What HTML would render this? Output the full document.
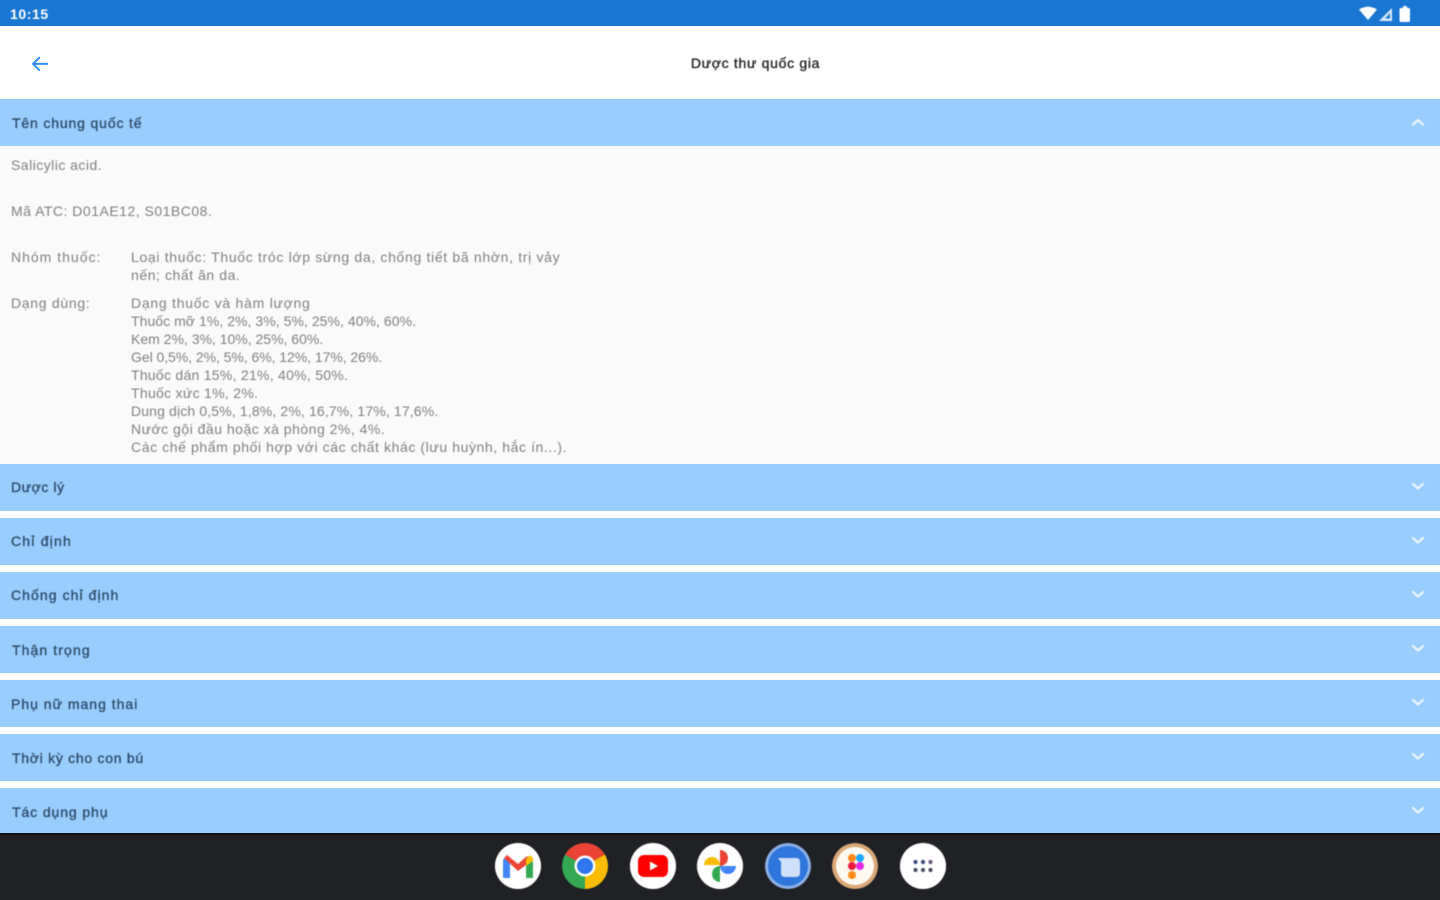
<!DOCTYPE html>
<html lang="vi">
<head>
<meta charset="utf-8">
<title>Dược thư quốc gia</title>
<style>
html,body{margin:0;padding:0;background:#fafafa}
body{width:1440px;height:900px;overflow:hidden;position:relative;font-family:"Liberation Sans","Noto Sans CJK SC",sans-serif}
.abs{position:absolute}
#status{left:0;top:0;width:1440px;height:26px;background:#1976d2}
#time{left:10px;top:5px;color:#fff;font-size:14px;line-height:18px;font-weight:bold;letter-spacing:.6px;filter:blur(.6px)}
#appbar{left:0;top:26px;width:1440px;height:73px;background:#fff}
#title{left:0;top:54px;width:1511px;text-align:center;font-size:14px;line-height:18px;color:#222;letter-spacing:.7px;-webkit-text-stroke:.35px #222;filter:blur(.6px)}
.hd{position:absolute;left:0;width:1440px;height:47px;background:#99ccff}
.hd span{position:absolute;left:11px;top:14px;font-size:14px;line-height:18px;color:#2b4a66;-webkit-text-stroke:.3px #2b4a66;filter:blur(.6px);white-space:nowrap}
.hd svg{position:absolute;left:1410px;top:14px;filter:blur(.4px)}
.t{position:absolute;font-size:14px;line-height:18px;color:#808080;white-space:nowrap;filter:blur(.6px)}
.t b{display:block;font-weight:normal}
#dock{left:0;top:833px;width:1440px;height:67px;background:#202124}
#dockline{left:0;top:833px;width:1440px;height:2px;background:#111214}
.ic{position:absolute;top:843px;width:46px;height:46px;border-radius:50%;background:#fff;overflow:hidden;filter:blur(.5px)}
</style>
</head>
<body>
<div class="abs" id="status"></div>
<div class="abs" id="time">10:15</div>
<svg class="abs" style="left:1355px;top:3px;filter:blur(.5px)" width="60" height="20" viewBox="0 0 60 20">
<path d="M4 6.500Q13 1 22 6.500L13 17Z" fill="#fff"/>
<path d="M37 5V18H24Z" fill="#fff" opacity=".85"/>
<path d="M35 10V15.500H30Z" fill="#1976d2"/>
<rect x="44.500" y="5" width="10.500" height="14" rx="1.500" fill="#fff"/><rect x="48" y="3" width="4" height="2" fill="#fff"/>
</svg>
<div class="abs" id="appbar"></div>
<svg class="abs" style="left:28px;top:52px;filter:blur(.3px)" width="24" height="24" viewBox="0 0 24 24" fill="none" stroke="#2f8ff0" stroke-width="2.200" stroke-linecap="round" stroke-linejoin="round"><path d="M20 12H4M11 5l-7 7 7 7" transform="translate(1.500 1.300) scale(.88)"/></svg>
<div class="abs" id="title">Dược thư quốc gia</div>

<div class="hd" style="top:99px"><span style="top:15px;left:12px;letter-spacing:.85px">Tên chung quốc tế</span><svg width="16" height="16" viewBox="0 0 16 16" fill="none" stroke="#eaf4ff" stroke-width="2.200" stroke-linecap="round" stroke-linejoin="round" style="top:15px"><path d="M3 10.500L8 6l5 4.500"/></svg></div>

<div class="t" style="left:11px;top:156px;letter-spacing:.47px">Salicylic acid.</div>
<div class="t" style="left:11px;top:202px;letter-spacing:.5px">Mã ATC: D01AE12, S01BC08.</div>
<div class="t" style="left:11px;top:248px;letter-spacing:1px">Nhóm thuốc:</div>
<div class="t" style="left:131px;top:248px"><b style="letter-spacing:.67px">Loại thuốc: Thuốc tróc lớp sừng da, chống tiết bã nhờn, trị vảy</b><b style="letter-spacing:.56px">nến; chất ăn da.</b></div>
<div class="t" style="left:11px;top:294px;letter-spacing:.7px">Dạng dùng:</div>
<div class="t" style="left:131px;top:294px">
<b style="letter-spacing:.74px">Dạng thuốc và hàm lượng</b>
<b style="letter-spacing:.05px">Thuốc mỡ 1%, 2%, 3%, 5%, 25%, 40%, 60%.</b>
<b>Kem 2%, 3%, 10%, 25%, 60%.</b>
<b style="letter-spacing:-.05px">Gel 0,5%, 2%, 5%, 6%, 12%, 17%, 26%.</b>
<b style="letter-spacing:.27px">Thuốc dán 15%, 21%, 40%, 50%.</b>
<b style="letter-spacing:.3px">Thuốc xức 1%, 2%.</b>
<b style="letter-spacing:.14px">Dung dịch 0,5%, 1,8%, 2%, 16,7%, 17%, 17,6%.</b>
<b style="letter-spacing:.5px">Nước gội đầu hoặc xà phòng 2%, 4%.</b>
<b style="letter-spacing:.59px">Các chế phẩm phối hợp với các chất khác (lưu huỳnh, hắc ín...).</b>
</div>

<div style="position:absolute;left:0;top:511px;width:1440px;height:322px;background:#fff"></div>
<div class="hd" style="top:464px"><span style="letter-spacing:.57px">Dược lý</span><svg width="16" height="16" viewBox="0 0 16 16" fill="none" stroke="#eaf4ff" stroke-width="2.200" stroke-linecap="round" stroke-linejoin="round"><path d="M3 6l5 4.500L13 6"/></svg></div>
<div class="hd" style="top:518px"><span style="letter-spacing:1.2px">Chỉ định</span><svg width="16" height="16" viewBox="0 0 16 16" fill="none" stroke="#eaf4ff" stroke-width="2.200" stroke-linecap="round" stroke-linejoin="round"><path d="M3 6l5 4.500L13 6"/></svg></div>
<div class="hd" style="top:572px"><span style="letter-spacing:1.07px">Chống chỉ định</span><svg width="16" height="16" viewBox="0 0 16 16" fill="none" stroke="#eaf4ff" stroke-width="2.200" stroke-linecap="round" stroke-linejoin="round"><path d="M3 6l5 4.500L13 6"/></svg></div>
<div class="hd" style="top:626px"><span style="top:15px;left:12px;letter-spacing:1.1px">Thận trọng</span><svg width="16" height="16" viewBox="0 0 16 16" fill="none" stroke="#eaf4ff" stroke-width="2.200" stroke-linecap="round" stroke-linejoin="round"><path d="M3 6l5 4.500L13 6"/></svg></div>
<div class="hd" style="top:680px"><span style="top:15px;letter-spacing:1px">Phụ nữ mang thai</span><svg width="16" height="16" viewBox="0 0 16 16" fill="none" stroke="#eaf4ff" stroke-width="2.200" stroke-linecap="round" stroke-linejoin="round"><path d="M3 6l5 4.500L13 6"/></svg></div>
<div class="hd" style="top:734px"><span style="top:15px;left:12px;letter-spacing:.72px">Thời kỳ cho con bú</span><svg width="16" height="16" viewBox="0 0 16 16" fill="none" stroke="#eaf4ff" stroke-width="2.200" stroke-linecap="round" stroke-linejoin="round"><path d="M3 6l5 4.500L13 6"/></svg></div>
<div class="hd" style="top:788px;height:45px"><span style="top:15px;left:12px;letter-spacing:.9px">Tác dụng phụ</span><svg width="16" height="16" viewBox="0 0 16 16" fill="none" stroke="#eaf4ff" stroke-width="2.200" stroke-linecap="round" stroke-linejoin="round"><path d="M3 6l5 4.500L13 6"/></svg></div>

<div class="abs" id="dock"></div>
<div class="abs" id="dockline"></div>

<!-- Gmail -->
<svg class="ic" style="left:495px" viewBox="0 0 46 46">
<circle cx="23" cy="23" r="23" fill="#fff"/>
<path d="M8 35V17l3-4 4 3v19Z" fill="#4285f4"/>
<path d="M31 35V16l4-3 3 4v18Z" fill="#34a853"/>
<path d="M9 15l3-3 11 9 9-8 3 6-12 9Z" fill="#ea4335"/>
<path d="M31 16l4-4 3 3v3l-7 5Z" fill="#fbbc04"/>
</svg>
<!-- Chrome -->
<svg class="ic" style="left:562px;background:none" viewBox="0 0 46 46">
<circle cx="23" cy="23" r="23" fill="#34a853"/>
<path d="M23 23L3 11.500A23 23 0 0 1 43 11.500Z" fill="#ea4335"/>
<path d="M23 23L43 11.500A23 23 0 0 1 23 46Z" fill="#fbbc04"/>
<circle cx="23" cy="23" r="10.500" fill="#fff"/>
<circle cx="23" cy="23" r="8" fill="#2f76ec"/>
</svg>
<!-- YouTube -->
<svg class="ic" style="left:630px" viewBox="0 0 46 46">
<circle cx="23" cy="23" r="23" fill="#fff"/>
<rect x="8" y="12" width="30" height="22" rx="6" fill="#f00"/>
<path d="M20 18.500L28 23l-8 4.500Z" fill="#fff"/>
</svg>
<!-- Photos -->
<svg class="ic" style="left:697px" viewBox="0 0 46 46">
<circle cx="23" cy="23" r="23" fill="#fff"/>
<path d="M23 22H7A8 8 0 0 1 23 22Z" fill="#fbbc04"/>
<path d="M23 23V7A8 8 0 0 1 23 23Z" fill="#ea4335"/>
<path d="M23 23H39A8 8 0 0 1 23 23Z" fill="#4285f4"/>
<path d="M23 23V39A8 8 0 0 1 23 23Z" fill="#34a853"/>
</svg>
<!-- Messages -->
<svg class="ic" style="left:765px;background:none" viewBox="0 0 46 46">
<circle cx="23" cy="23" r="23" fill="#8ab0e8"/>
<circle cx="23" cy="23" r="20" fill="#2f76dc"/>
<path d="M13 15H31Q35 15 35 19V30Q35 34 31 34H20Q16 34 16 30V19Z" fill="#cfe0fa"/>
</svg>
<!-- Figma -->
<svg class="ic" style="left:832px;background:none" viewBox="0 0 46 46">
<circle cx="23" cy="23" r="23" fill="#d9a878"/>
<circle cx="23" cy="23" r="19" fill="#fff8f0"/>
<circle cx="20" cy="15" r="4" fill="#ff8a1a"/>
<circle cx="28" cy="15" r="4" fill="#1aa8fe"/>
<circle cx="20" cy="23" r="4" fill="#f01e3c"/>
<circle cx="28" cy="23" r="4" fill="#e629e6"/>
<circle cx="20" cy="32" r="4" fill="#ff8a1a"/>
</svg>
<!-- Apps -->
<svg class="ic" style="left:900px" viewBox="0 0 46 46">
<circle cx="23" cy="23" r="23" fill="#fff"/>
<circle cx="15.500" cy="19" r="2.100" fill="#3c4a80"/><circle cx="23" cy="19" r="2.100" fill="#3c4a80"/><circle cx="30.500" cy="19" r="2.100" fill="#6a5a80"/>
<circle cx="15.500" cy="27" r="2.100" fill="#4a5060"/><circle cx="23" cy="27" r="2.100" fill="#4a5060"/><circle cx="30.500" cy="27" r="2.100" fill="#4a5060"/>
</svg>
</body>
</html>
